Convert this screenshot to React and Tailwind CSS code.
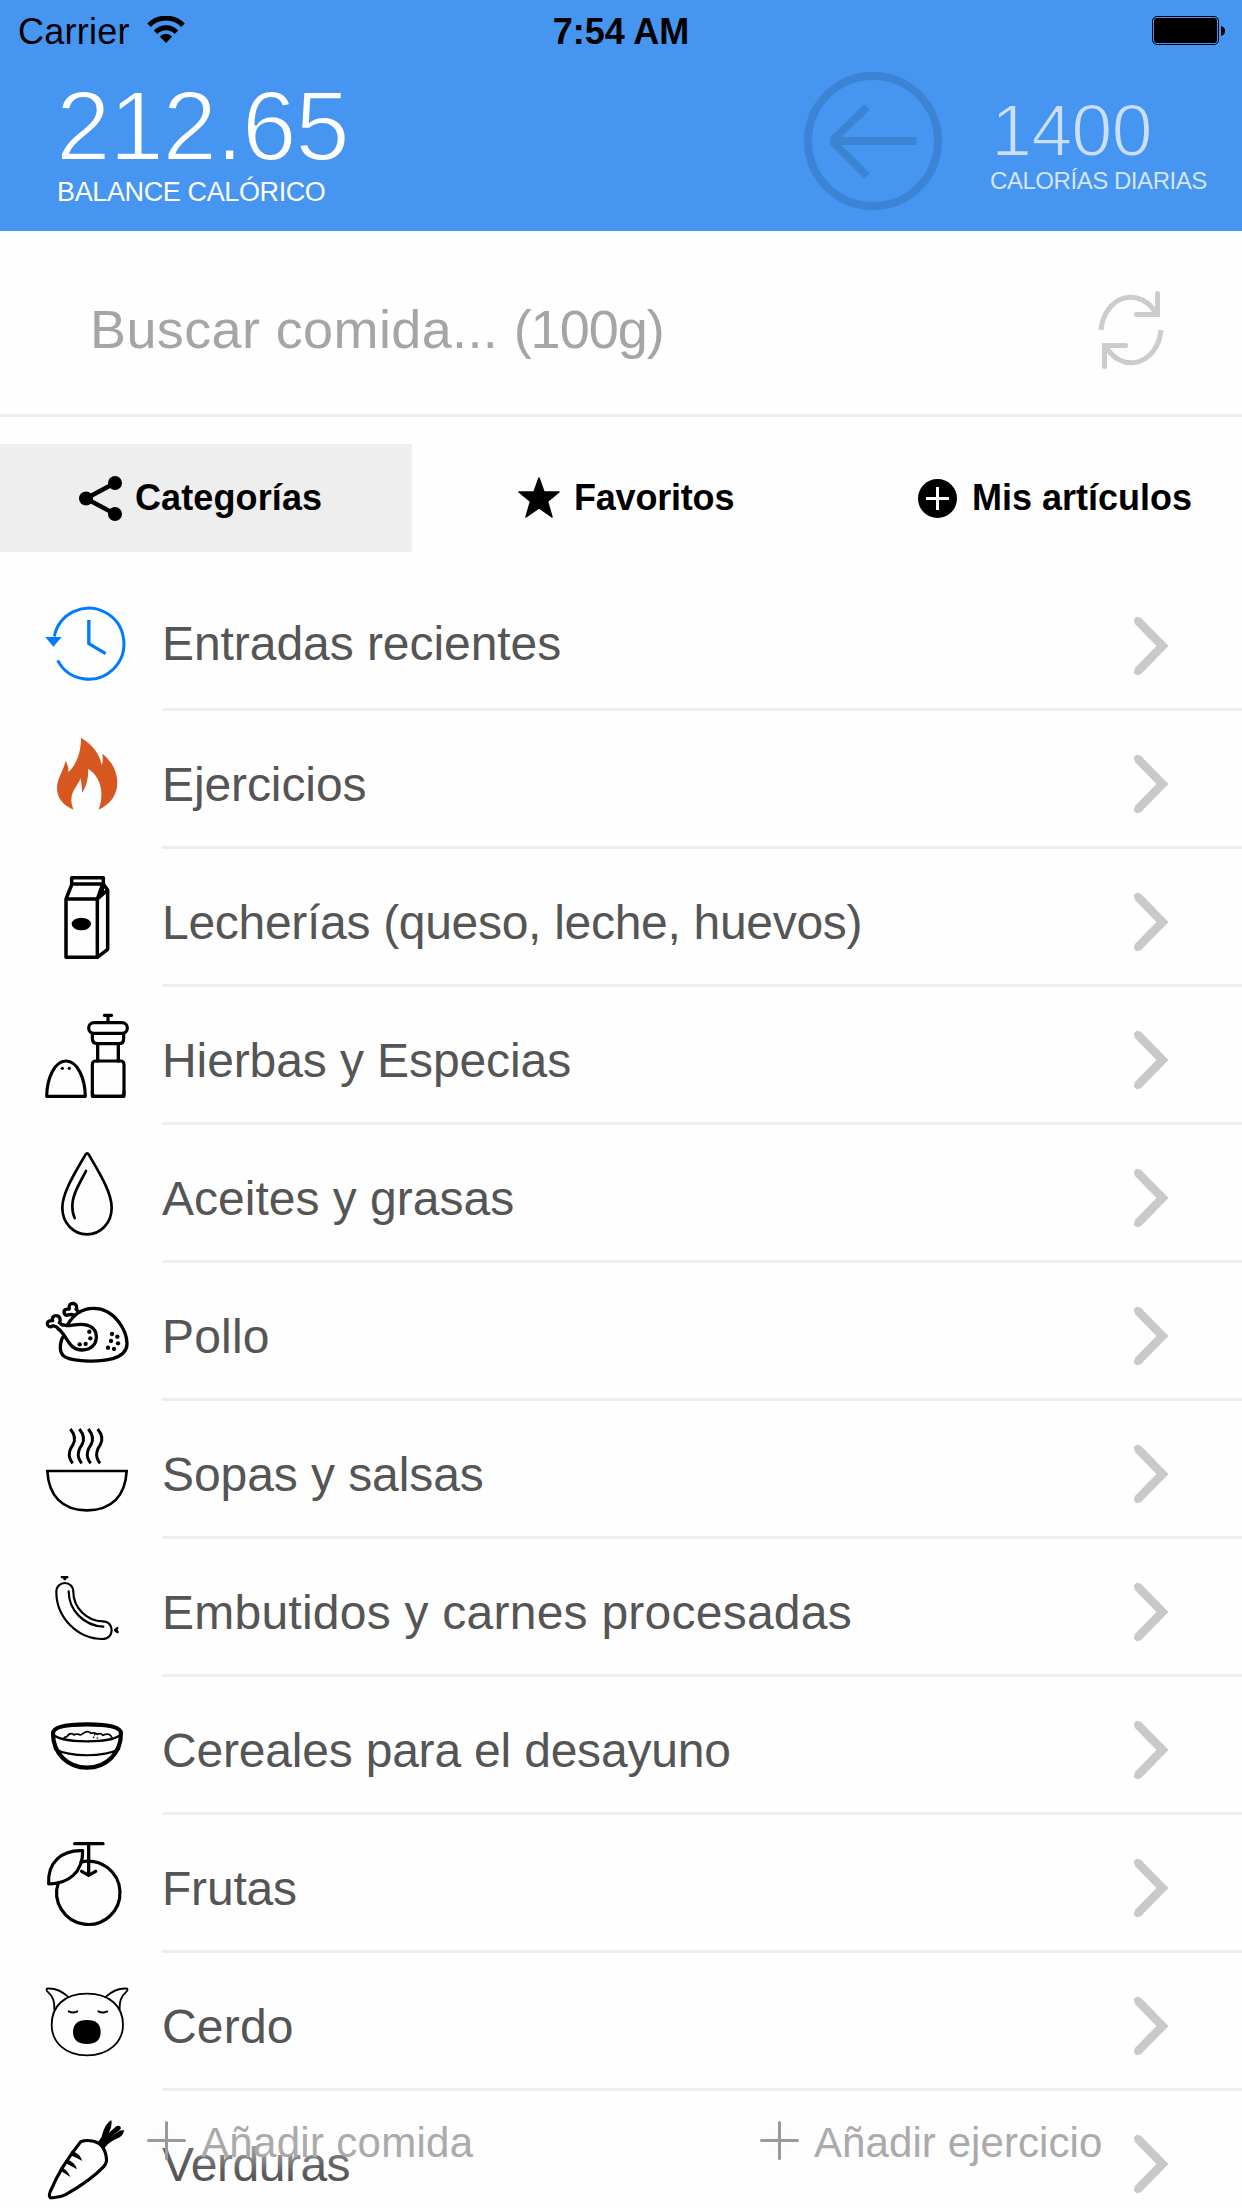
import React from "react";

/* Category icons are drawn on a 486x414 grid (three units per pixel). */
function RowIcon({ top, children, color = "#000", sw = 8 }) {
  return (
    <svg
      className="block h-[138px] w-[162px] shrink-0"
      viewBox={`0 ${top} 486 414`}
      fill="none"
      stroke={color}
      strokeWidth={sw}
      strokeLinecap="round"
      strokeLinejoin="round"
    >
      {children}
    </svg>
  );
}

const Dots = ({ points, r }) =>
  points.map(([x, y]) => <circle key={`${x}-${y}`} cx={x} cy={y} r={r} fill="#000" stroke="none" />);

const Recent = () => (
  <RowIcon top={9} color="#007aff" sw={9}>
    <path strokeLinecap="butt" d="M163 199A105.500 106.500 0 1 1 173 271" />
    <path d="M136 201H185L160 230Z" fill="#007aff" stroke="none" />
    <path d="M266.500 150V221L317 251" strokeWidth="10" strokeLinecap="butt" strokeLinejoin="miter" />
  </RowIcon>
);

const Fire = () => (
  <RowIcon top={423} color="none">
    <path
      fill="#d65720"
      d="M243 503C276 522 301 553 305 586C309 576 309 564 307 551C334 571 352 605 352 638C352 674 330 704 295 719C302 705 305 687 304 668C303 638 288 610 264 597C266 623 259 650 246 669C246 654 245 639 241 625C238 642 214 660 214 690C214 700 217 711 221 719C190 708 171 683 171 655C171 625 189 607 197 572C203 583 206 595 205 607C227 586 244 548 243 503Z"
    />
  </RowIcon>
);

const Milk = () => (
  <RowIcon top={837} sw={10.5}>
    <path d="M198 987H292V1162H198ZM198 987L216 942H308L292 987M215 942V923H310V942L323 960V1138L292 1162M323 960L292 987M310 942L304 975" />
    <ellipse cx="244" cy="1062" rx="29" ry="19" fill="#000" stroke="none" />
  </RowIcon>
);

const Spices = () => (
  <RowIcon top={21} sw={9.5}>
    <path d="M140 349H256C255 295 233 243 198 243C163 243 141 295 140 349Z" />
    <rect x="277" y="243" width="95" height="106" rx="10" />
    <path d="M277 335V349H372V335" />
    <path d="M293 192V243M355 192V243" strokeWidth="10" />
    <path d="M277 161V176Q278 191 292 191H356Q371 191 371 176V161" />
    <rect x="266" y="128" width="116" height="32" rx="16" />
    <path d="M313 106H335M324 106V126" />
    <Dots points={[[187, 265], [208, 265]]} r={5} />
  </RowIcon>
);

const Drop = () => (
  <RowIcon top={435} sw={8}>
    <path d="M257 523C260 519 263 519 266 523C292 569 335 634 335 683C335 729 302 763 261 763C220 763 187 729 187 683C187 637 226 577 257 523Z" />
    <path d="M258 573C240 608 217 643 217 678C217 690 219 704 224 714" />
  </RowIcon>
);

const Chicken = () => (
  <RowIcon top={849} sw={10}>
    <path d="M203 1034C221 1002 249 985 281 985C346 985 381 1055 381 1091C381 1117 360 1129 338 1136C302 1146 241 1145 207 1136C189 1131 181 1119 181 1105C181 1089 184 1076 192 1067" />
    <path d="M174 1046C202 1065 204 1110 247 1110C272 1110 289 1094 289 1070C289 1045 268 1033 243 1033C223 1033 212 1038 200 1037L187 1034" />
    <path d="M174 1046C172 1040 162 1037 157 1038C150 1044 142 1037 142 1031C142 1025 148 1021 158 1022C154 1012 162 1006 169 1007C181 1008 183 1021 178 1028L187 1035" />
    <path d="M222 1005C214 1001 206 1005 200 1006C191 1004 189 991 198 988C203 986 208 990 208 985C205 976 211 970 218 970C230 971 232 981 228 988L238 997" />
    <Dots points={[[268, 1055], [271, 1075], [257, 1092], [239, 1093], [336, 1062], [352, 1070], [333, 1083], [354, 1090], [324, 1103], [342, 1107]]} r={6.5} />
  </RowIcon>
);

const Soup = () => (
  <RowIcon top={3} sw={8}>
    <path strokeLinejoin="miter" d="M142 213H380C376 287 336 331 261 331C186 331 146 287 142 213Z" />
    {[-1, 26, 53, 81].map((dx) => (
      <path
        key={dx}
        strokeLinecap="butt"
        strokeWidth="9"
        transform={`translate(${dx} 0)`}
        d="M212 87C225 103 229 118 220 134C211 147 206 158 210 173C212 180 215 185 219 190"
      />
    ))}
  </RowIcon>
);

const Sausage = () => (
  <RowIcon top={417} sw={6.5}>
    <path d="M169 576C169 540 220 540 220 576C220 623 261 664 308 664C344 664 344 717 308 717C232 717 169 652 169 576Z" />
    <path d="M206 574C206 630 251 677 310 680" />
    <path d="M183 528L204 528L206 533L199 536L198 541H191L190 536L182 533Z M342 688L351 681L355 680V686L352 689L356 694V700L351 700L343 694Z" fill="#000" stroke="none" />
  </RowIcon>
);

const Cereal = () => (
  <RowIcon top={831} sw={5}>
    <path strokeWidth="12.5" d="M159 1000C159 979 206 973 261 973C316 973 363 979 363 1000C363 1060 319 1103 261 1103C203 1103 159 1060 159 1000Z" />
    <path strokeWidth="7" d="M159 1000C166 1017 212 1024 261 1024C310 1024 356 1017 363 1000" />
    <path strokeWidth="6" d="M164 1047C212 1072 310 1072 358 1047" />
    <path d="M190 1018Q194 1010 201 1010Q207 997 219 1002Q222 1007 225 1003Q235 1001 241 1005Q248 1002 253 998Q264 991 273 1000Q284 996 292 1003Q301 998 309 1006Q320 1000 329 1004Q337 1010 335 1018" />
    <Dots points={[[281, 1012], [292, 1014], [284, 1004]]} r={2.5} />
  </RowIcon>
);

const Fruit = () => (
  <RowIcon top={45} sw={9.5}>
    <path d="M243 186A95 95 0 1 1 175 248" />
    <path d="M146 252C142 186 187 149 248 152C249 217 205 252 146 252Z" />
    <path strokeWidth="10" d="M224 131H309M266 131V225M245 214L266 226L287 214" />
  </RowIcon>
);

const Pig = () => (
  <RowIcon top={459} sw={5.5}>
    <path d="M261 581C329 581 369 619 369 674C369 727 326 766 261 766C196 766 155 727 155 674C155 619 193 581 261 581Z" />
    <path d="M163 628C164 606 161 591 140 572V566C166 563 185 573 204 590M359 628C358 606 361 591 382 572V566C356 563 337 573 318 590" />
    <path d="M206 634Q219 641 232 634M295 634Q308 641 322 634" />
    <path d="M261 660C290 660 302 674 302 696C302 720 288 732 261 732C234 732 219 720 219 696C219 674 232 660 261 660Z" fill="#000" stroke="none" />
  </RowIcon>
);

const Carrot = () => (
  <RowIcon top={873} sw={9.5}>
    <path d="M242 1025C261 1019 284 1023 298 1031C310 1040 315 1051 318 1066C320 1078 322 1088 311 1100C278 1136 237 1161 197 1184C181 1192 162 1194 151 1193C146 1189 149 1178 153 1170C171 1126 203 1074 242 1025Z" />
    <path fill="#000" stroke="none" d="M293 1028L305 1010C310 993 314 974 334 960C337 975 331 991 326 999L347 980C356 973 365 979 362 987L331 1014L358 992L372 990C371 1003 363 1011 353 1015C337 1023 326 1028 317 1040L309 1047Z" />
    <path fill="#000" stroke="none" d="M215 1053Q240 1060 247 1083Q231 1074 211 1065ZM199 1078Q224 1085 231 1108Q214 1098 195 1088ZM183 1101Q203 1110 211 1131Q195 1120 178 1111Z" />
  </RowIcon>
);

const Chevron = () => (
  <svg className="mt-[43px] mr-[73px] block h-[60px] w-[36px] shrink-0" viewBox="0 0 36 60" fill="none">
    <path d="M4.500 4.500L29.500 30L4.500 55.500" stroke="#c9c9c9" strokeWidth="8.500" />
    <path d="M4.500 4.500L29.500 30L4.500 55.500" stroke="#c9c9c9" strokeWidth="7" strokeLinecap="round" />
  </svg>
);

const rows = [
  ["Entradas recientes", Recent, "pt-[47px] tracking-[-0.06px]"],
  ["Ejercicios", Fire, "pt-[50px] tracking-[-0.1px]"],
  ["Lecherías (queso, leche, huevos)", Milk, "pt-[50px] tracking-[-0.3px]"],
  ["Hierbas y Especias", Spices, "pt-[50px] tracking-[-0.1px]"],
  ["Aceites y grasas", Drop, "pt-[50px]"],
  ["Pollo", Chicken, "pt-[50px] tracking-[0.2px]"],
  ["Sopas y salsas", Soup, "pt-[50px] tracking-[-0.08px]"],
  ["Embutidos y carnes procesadas", Sausage, "pt-[50px] tracking-[0.24px]"],
  ["Cereales para el desayuno", Cereal, "pt-[50px] tracking-[-0.2px]"],
  ["Frutas", Fruit, "pt-[50px] tracking-[-0.2px]"],
  ["Cerdo", Pig, "pt-[50px] tracking-[0.2px]"],
  ["Verduras", Carrot, "pt-[50px] tracking-[-0.5px]"],
];

function StatusBar() {
  return (
    <div className="flex h-[50px] items-start justify-between text-[36px] leading-none text-black">
      <div className="flex w-[400px] items-start pl-[18px]">
        <span className="pt-[14px] tracking-[0.25px]">Carrier</span>
        <svg className="mt-[16px] ml-[17px] h-[27px] w-[38px]" viewBox="0 0 38 27" fill="none" stroke="#000">
          <path d="M2 9.200C11.500-0.300 26.500-0.300 36 9.200" strokeWidth="5" />
          <path d="M8.500 16.300C14.500 10.300 23.500 10.300 29.500 16.300" strokeWidth="5" />
          <path d="M12.700 20.600Q19 14.900 25.300 20.600L19 27Z" fill="#000" stroke="none" />
        </svg>
      </div>
      <span className="pt-[14px] text-[36px] font-bold">7:54 AM</span>
      <div className="flex w-[400px] justify-end pr-[17px]">
        <svg className="mt-[16px] h-[29px] w-[73px]" viewBox="0 0 73 29">
          <rect x="0.500" y="0.500" width="66" height="28" rx="4.500" fill="none" stroke="#000" />
          <rect x="2" y="2" width="63" height="25" rx="3" fill="#000" />
          <path d="M69 10Q73 11 73 14.500Q73 19 69 20Z" fill="#000" />
        </svg>
      </div>
    </div>
  );
}

function Header() {
  return (
    <header className="h-[231px] bg-[#4595f1]">
      <StatusBar />
      <div className="flex items-start leading-none text-white">
        <div className="w-[804px] pl-[56px]">
          <div className="mt-[27px] text-[98px] tracking-[-1.2px] [-webkit-text-stroke:2px_#4595f1]">212.65</div>
          <div className="mt-[4px] ml-px text-[27px] tracking-[-0.38px]">BALANCE CALÓRICO</div>
        </div>
        <svg className="mt-[22px] h-[138px] w-[138px] shrink-0" viewBox="0 0 138 138" fill="none" stroke="#3c84d3" strokeWidth="8">
          <circle cx="69" cy="69" r="65" />
          <path strokeLinejoin="round" d="M63 35L31 66Q29 69 31 72L63 104M31 69H112.500" />
        </svg>
        <div className="pl-[48px]">
          <div className="mt-[44px] ml-px text-[74px] tracking-[-1px] text-[#c9dffb] [-webkit-text-stroke:1.8px_#4595f1]">1400</div>
          <div className="mt-px text-[24px] tracking-[-0.45px] text-[#d5e6fc]">CALORÍAS DIARIAS</div>
        </div>
      </div>
    </header>
  );
}

function SearchBar() {
  return (
    <div className="flex h-[186px] items-start justify-between border-b-[3px] border-[#eee] pr-[78px] pl-[90px]">
      <div className="pt-[71px] text-[54px] leading-none whitespace-pre text-[#a5a5a5]">
        <span className="tracking-[0.38px]">Buscar comida... </span>
        <span className="tracking-[-1px]">(100g)</span>
      </div>
      <svg className="mt-[60px] h-[78px] w-[66px]" viewBox="0 0 66 78" fill="none" stroke="#ccc" strokeWidth="5">
        <path d="M3 39A30 36 0 0 1 58.500 23.500M63 39A30 36 0 0 1 7.500 54.500" />
        <path strokeLinecap="round" d="M59.500 2.500V23.500H38.500M6.500 75.500V54.500H27.500" />
      </svg>
    </div>
  );
}

function Tabs() {
  return (
    <nav className="mt-[27px] flex h-[108px] text-[36px] leading-none font-bold text-black">
      <div className="flex w-[412px] items-center bg-[#eee] pl-[79px]">
        <svg className="h-[45px] w-[43px]" viewBox="0 0 43 45">
          <path d="M36 7L7 22.500L36 38" stroke="#000" strokeWidth="4.500" fill="none" />
          <circle cx="36" cy="7" r="7" />
          <circle cx="7" cy="22.500" r="7" />
          <circle cx="36" cy="38" r="7" />
        </svg>
        <span className="ml-[13px] tracking-[0.12px]">Categorías</span>
      </div>
      <div className="flex w-[414px] items-center pl-[106px]">
        <svg className="h-[42px] w-[42px]" viewBox="0 0 42 42">
          <path d="M21 1L26 15H41L29.500 24.500L34 40L21 31L8 40L12.500 24.500L1 15H16Z" stroke="#000" strokeWidth="1.500" strokeLinejoin="round" />
        </svg>
        <span className="ml-[14px] tracking-[-0.2px]">Favoritos</span>
      </div>
      <div className="flex flex-1 items-center pl-[92px]">
        <svg className="h-[39px] w-[39px]" viewBox="0 0 39 39">
          <circle cx="19.500" cy="19.500" r="19.500" />
          <path d="M19.500 8V31M8 19.500H31" stroke="#fff" strokeWidth="3" />
        </svg>
        <span className="ml-[15px] whitespace-nowrap">Mis artículos</span>
      </div>
    </nav>
  );
}

function AddButton({ label, className }) {
  return (
    <div className={className}>
      <svg
        className="mt-[1px] h-[39px] w-[39px] shrink-0 overflow-visible [filter:drop-shadow(0_0_14px_#f2f2f2)]"
        viewBox="0 0 39 39"
        stroke="#999"
        strokeWidth="3"
        strokeLinecap="round"
      >
        <path d="M19.500 1.500V37.500M1.500 19.500H37.500" />
      </svg>
      <span className="mt-px ml-[15px] whitespace-nowrap [text-shadow:0_0_24px_#f9f9f9,0_0_24px_#f9f9f9]">{label}</span>
    </div>
  );
}

export default function App() {
  return (
    <div className="relative h-[2208px] w-[1242px] overflow-hidden bg-[#fefefe] font-['Liberation_Sans',Arial,sans-serif]">
      <Header />
      <SearchBar />
      <Tabs />
      <main className="mt-[21px]">
        {rows.map(([label, Icon, cls]) => (
          <div key={label} className="flex h-[138px]">
            <Icon />
            <div className="flex flex-1 items-start justify-between border-b-[3px] border-[#eee]">
              <span className={`text-[48px] leading-none whitespace-nowrap text-[#555] ${cls}`}>{label}</span>
              <Chevron />
            </div>
          </div>
        ))}
      </main>
      <footer className="absolute inset-x-0 top-[2120px] flex text-[42px] leading-[44px] text-[#aaa]">
        <AddButton label="Añadir comida" className="flex w-[760px] items-start pl-[147px] tracking-[0.3px]" />
        <AddButton label="Añadir ejercicio" className="flex items-start tracking-[0.08px]" />
      </footer>
    </div>
  );
}
